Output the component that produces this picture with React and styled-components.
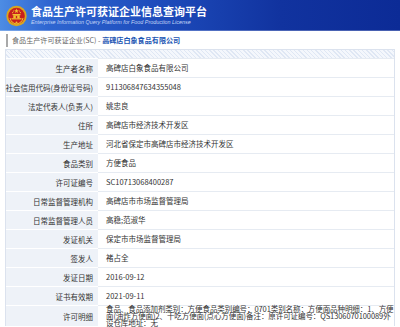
import React from "react";
import styled, { createGlobalStyle } from "styled-components";

const Global = createGlobalStyle`
  html, body { margin: 0; padding: 0; background: #fff; }
  body { font-family: "Noto Sans CJK SC", "Liberation Sans", sans-serif; color: #333; }
`;

const Page = styled.div`
  width: 400px;
  height: 327px;
  overflow: hidden;
  background: #fff;
`;

const Header = styled.header`
  height: 31px;
  display: flex;
  align-items: center;
  gap: 4px;
  padding-left: 6px;
  background: linear-gradient(to right, #4d8ce4 0%, #2f66d1 12%, #1d4bbb 40%, #11339f 70%, #0c2b96 100%);
  box-shadow: inset 0 -1px 0 rgba(255,255,255,0.25);
`;

const TitleBlock = styled.div`
  display: flex;
  flex-direction: column;
  gap: 1px;
`;

const Title = styled.div`
  color: #fff;
  font-size: 11px;
  font-weight: 700;
  line-height: 13px;
  white-space: nowrap;
`;

const Subtitle = styled.div`
  color: #c3d5f6;
  font-family: "Liberation Sans", sans-serif;
  font-style: italic;
  font-size: 5.4px;
  line-height: 7px;
  white-space: nowrap;
`;

const Breadcrumb = styled.div`
  margin: 3px 0 0 6px;
  height: 13px;
  line-height: 13px;
  border-left: 2px solid #a9a9a9;
  padding-left: 4px;
  font-size: 7.1px;
  color: #666;
  white-space: nowrap;
`;

const Company = styled.span`
  color: #1b55b3;
  font-weight: 700;
`;

const Table = styled.div`
  margin: 2px 5px 0 5px;
  border: 1px solid #dbe2ee;
  border-bottom: none;
`;

const StripeHead = styled.div`
  height: 8px;
  background: repeating-linear-gradient(45deg, #f4f7fc 0 2px, #dfe7f4 2px 3px);
`;

const Row = styled.div`
  display: grid;
  grid-template-columns: 92px 1fr;
  min-height: 18px;
  border-top: 1px solid #e6ebf2;
`;

const Label = styled.div`
  background: #eef2f8;
  box-shadow: 0 -1px 0 #fff;
  display: flex;
  align-items: center;
  justify-content: flex-end;
  padding-right: 5px;
  font-size: 7.5px;
  color: #333;
  white-space: nowrap;
`;

const Value = styled.div`
  display: flex;
  align-items: ${(p) => (p.$multi ? "flex-start" : "center")};
  padding-left: 8px;
  font-size: 7.5px;
  line-height: ${(p) => (p.$multi ? "6.8px" : "18px")};
  letter-spacing: ${(p) => (p.$multi ? "-0.08px" : "0")};
  color: #333;
  word-break: break-all;
`;

const Emblem = () => (
  <svg width="21" height="24" viewBox="0 0 21 24">
    <circle cx="10.5" cy="12" r="10.2" fill="#d9a520" />
    <circle cx="10.5" cy="12" r="8.3" fill="#c8201e" />
    <polygon points="10.5,4.5 11.1,6.2 12.9,6.2 11.5,7.2 12,8.9 10.5,7.9 9,8.9 9.5,7.2 8.1,6.2 9.9,6.2" fill="#f2c230" />
    <circle cx="7.5" cy="7" r="0.6" fill="#f2c230" />
    <circle cx="13.5" cy="7" r="0.6" fill="#f2c230" />
    <circle cx="6.6" cy="8.6" r="0.6" fill="#f2c230" />
    <circle cx="14.4" cy="8.6" r="0.6" fill="#f2c230" />
    <rect x="6.5" y="10" width="8" height="1.2" fill="#f2c230" />
    <rect x="7.3" y="11.2" width="6.4" height="3" fill="#f2c230" />
    <rect x="5.5" y="14.2" width="10" height="1.2" fill="#f2c230" />
    <rect x="9.8" y="12" width="1.4" height="2.2" fill="#c8201e" />
    <path d="M4 14 Q5 19 10.5 20 Q16 19 17 14" stroke="#f2c230" strokeWidth="1" fill="none" />
    <circle cx="10.5" cy="18.6" r="1" fill="#f2c230" />
  </svg>
);

const rows = [
  ["生产者名称", "高碑店白象食品有限公司"],
  ["社会信用代码(身份证号码)", "911306847634355048"],
  ["法定代表人(负责人)", "姚忠良"],
  ["住所", "高碑店市经济技术开发区"],
  ["生产地址", "河北省保定市高碑店市经济技术开发区"],
  ["食品类别", "方便食品"],
  ["许可证编号", "SC10713068400287"],
  ["日常监督管理机构", "高碑店市市场监督管理局"],
  ["日常监督管理人员", "高稳;范淑华"],
  ["发证机关", "保定市市场监督管理局"],
  ["签发人", "褚占全"],
  ["发证日期", "2016-09-12"],
  ["证书有效期", "2021-09-11"],
];

const detail =
  "食品、食品添加剂类别：方便食品类别编号：0701类别名称：方便面品种明细：1、方便面(油炸方便面)2、干吃方便面(点心方便面)备注：原许可证编号：QS1306070100089外设仓库地址：无";

export default function App() {
  return (
    <Page>
      <Global />
      <Header>
        <Emblem />
        <TitleBlock>
          <Title>食品生产许可获证企业信息查询平台</Title>
          <Subtitle>Enterprise Information Query Platform for Food Production License</Subtitle>
        </TitleBlock>
      </Header>
      <Breadcrumb>
        食品生产许可获证企业(SC) - <Company>高碑店白象食品有限公司</Company>
      </Breadcrumb>
      <Table>
        <StripeHead />
        {rows.map(([k, v]) => (
          <Row key={k}>
            <Label>{k}</Label>
            <Value>{v}</Value>
          </Row>
        ))}
        <Row>
          <Label>许可明细</Label>
          <Value $multi>{detail}</Value>
        </Row>
      </Table>
    </Page>
  );
}
